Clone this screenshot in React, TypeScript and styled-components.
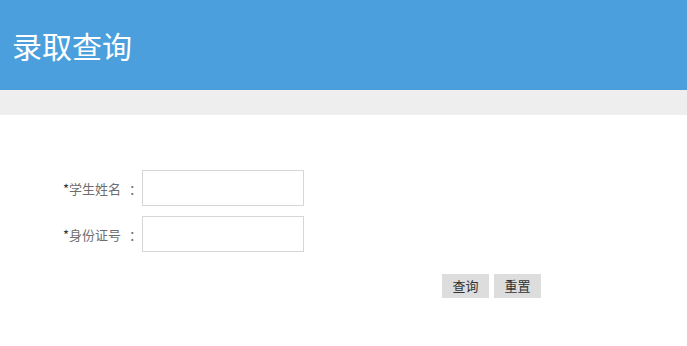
import React from "react";
import styled, { createGlobalStyle } from "styled-components";

const GlobalStyle = createGlobalStyle`
  body {
    margin: 0;
    background: #fff;
    font-family: "Noto Sans CJK SC", "Liberation Sans", sans-serif;
  }
`;

const Header = styled.div`
  height: 90px;
  background-color: #4a9fdc;
  display: flex;
  align-items: center;
  padding-left: 12px;
`;

const Title = styled.h1`
  margin: 0;
  font-size: 30px;
  font-weight: normal;
  color: #fff;
  line-height: 1;
`;

const Band = styled.div`
  height: 25px;
  background-color: #eeeeee;
`;

const Form = styled.form`
  padding-top: 55px;
  display: flex;
  flex-direction: column;
  gap: 10px;
`;

const Row = styled.div`
  display: flex;
  align-items: center;
`;

const Label = styled.label`
  width: 121px;
  text-align: right;
  font-size: 13px;
  color: #6e6e6e;
`;

const Colon = styled.span`
  width: 21px;
  padding-left: 8px;
  box-sizing: border-box;
  font-size: 13px;
  color: #6e6e6e;
`;

const Star = styled.span`
  color: #333;
`;

const Input = styled.input`
  width: 162px;
  height: 36px;
  box-sizing: border-box;
  border: 1px solid #d6d6d6;
  outline: none;
  margin: 0;
  padding: 0 6px;
`;

const Actions = styled.div`
  display: flex;
  gap: 5px;
  padding-left: 442px;
  margin-top: 12px;
`;

const Button = styled.button`
  width: 47px;
  height: 24px;
  border: none;
  background-color: #dddddd;
  color: #333;
  font-size: 13px;
  font-family: inherit;
  padding: 0 0 1px;
  cursor: pointer;
`;

const fields = [
  { id: "name", label: "学生姓名" },
  { id: "idcard", label: "身份证号" },
];

export default function App() {
  return (
    <>
      <GlobalStyle />
      <Header>
        <Title>录取查询</Title>
      </Header>
      <Band />
      <Form onSubmit={(e) => e.preventDefault()}>
        {fields.map((f) => (
          <Row key={f.id}>
            <Label htmlFor={f.id}>
              <Star>*</Star>
              {f.label}
            </Label>
            <Colon>：</Colon>
            <Input id={f.id} type="text" />
          </Row>
        ))}
        <Actions>
          <Button type="submit">查询</Button>
          <Button type="reset">重置</Button>
        </Actions>
      </Form>
    </>
  );
}
